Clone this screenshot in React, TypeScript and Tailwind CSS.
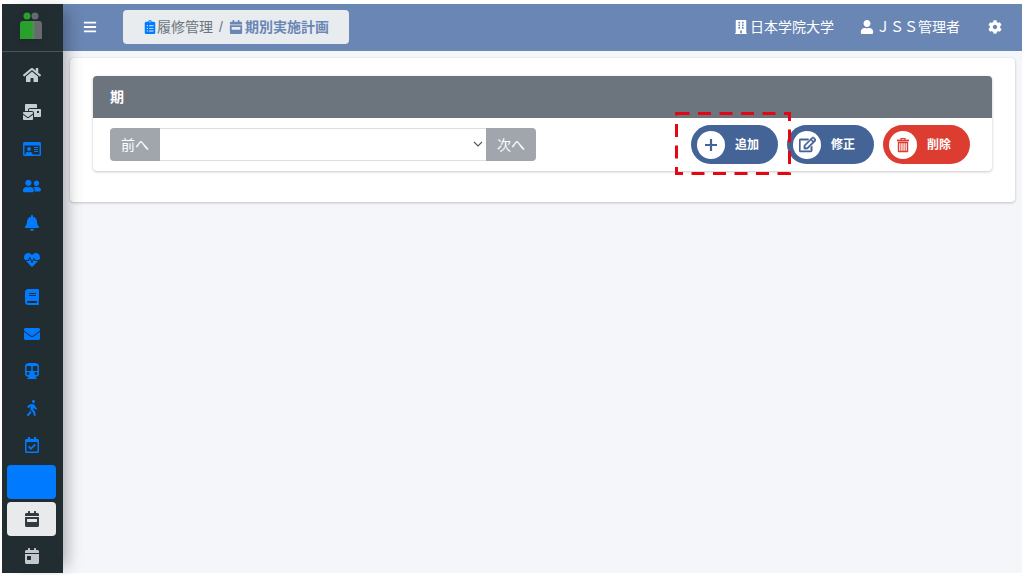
import React, { useState } from 'react';
import type { IconType } from 'react-icons';
import {
  FaBars,
  FaBell,
  FaBook,
  FaBuilding,
  FaCalendarDay,
  FaCalendarWeek,
  FaClipboardList,
  FaCog,
  FaEnvelope,
  FaHeartbeat,
  FaHome,
  FaMailBulk,
  FaRegCalendarCheck,
  FaRegEdit,
  FaRegIdCard,
  FaSubway,
  FaUser,
  FaUserFriends,
  FaWalking,
} from 'react-icons/fa';

type MenuItem = {
  label: string;
  icon?: IconType;
  className: string;
};

const menuItems: MenuItem[] = [
  { label: 'ホーム', icon: FaHome, className: 'text-[#c2d0d6]' },
  { label: '一括送信', icon: FaMailBulk, className: 'text-[#c2d0d6]' },
  { label: '学籍', icon: FaRegIdCard, className: 'text-[#007bff]' },
  { label: '保護者', icon: FaUserFriends, className: 'text-[#007bff]' },
  { label: 'お知らせ', icon: FaBell, className: 'text-[#007bff]' },
  { label: '保健', icon: FaHeartbeat, className: 'text-[#007bff]' },
  { label: '教科書', icon: FaBook, className: 'text-[#007bff]' },
  { label: 'メール', icon: FaEnvelope, className: 'text-[#007bff]' },
  { label: '通学', icon: FaSubway, className: 'text-[#007bff]' },
  { label: '就職', icon: FaWalking, className: 'text-[#007bff]' },
  { label: '出欠', icon: FaRegCalendarCheck, className: 'text-[#007bff]' },
  { label: '履修管理', className: 'bg-[#007bff] text-[#007bff]' },
  { label: '期別実施計画', icon: FaCalendarWeek, className: 'bg-[#e9eaeb] text-[#343a40]' },
  { label: '日別実施計画', icon: FaCalendarDay, className: 'text-[#c2c7d0]' },
];

const Logo: React.FC = () => (
  <svg viewBox="0 0 22 28" className="h-7 w-[22px] drop-shadow-md" aria-hidden="true">
    <defs>
      <linearGradient id="body" x1="0" x2="1">
        <stop offset="0.5" stopColor="#27a02c" />
        <stop offset="0.6" stopColor="#4f9152" />
        <stop offset="0.7" stopColor="#686b6d" />
      </linearGradient>
    </defs>
    <circle cx="15" cy="4" r="3.500" fill="#686b6d" />
    <circle cx="7" cy="4" r="3.500" fill="#27a02c" />
    <path d="M3 9h16a3 3 0 0 1 3 3v15H0V12a3 3 0 0 1 3-3z" fill="url(#body)" />
  </svg>
);

const PlusIcon: React.FC = () => (
  <svg viewBox="0 0 16 16" className="size-4" stroke="currentColor" strokeWidth="2.2">
    <path d="M8 2v12M2 8h12" />
  </svg>
);

const EditIcon: React.FC = () => (
  <FaRegEdit className="size-[17px]" stroke="currentColor" strokeWidth={16} />
);

const TrashIcon: React.FC = () => (
  <svg viewBox="0 0 16 16" className="size-4" fill="none" stroke="currentColor">
    <path d="M2 3.500h12" strokeWidth="1.800" />
    <path d="M6 3V1.500h4V3" strokeWidth="1.200" />
    <path d="M3.500 5.500h9v9h-9z" strokeWidth="1.400" strokeLinejoin="round" />
    <path d="M5.800 6v8M8 6v8M10.200 6v8" strokeWidth="0.900" />
  </svg>
);

const Sidebar: React.FC = () => (
  <aside className="z-10 w-[61px] shrink-0 bg-[#222d32] shadow-[10px_0_16px_-6px_rgba(0,0,0,0.3)]">
    <a
      href="#"
      aria-label="トップ"
      className="flex h-12 items-center justify-center border-b border-[#4b545c] pr-1 pb-1"
    >
      <Logo />
    </a>
    <nav className="flex flex-col gap-[3px] pt-[6px] pr-[7px] pl-[5px]">
      {menuItems.map(({ label, icon: Icon, className }) => (
        <a
          key={label}
          href="#"
          aria-label={label}
          className={`flex h-[34px] items-center justify-center rounded ${className}`}
        >
          {Icon && <Icon className="h-4 w-[18px]" />}
        </a>
      ))}
    </nav>
  </aside>
);

const Header: React.FC = () => (
  <header className="flex h-[47px] items-center bg-[#6a86b4] pb-px text-white">
    <button type="button" aria-label="メニュー" className="ml-5">
      <FaBars className="size-[14px]" />
    </button>
    <nav className="ml-[26px] flex h-[34px] items-center rounded bg-[#e9ecef] px-5 text-sm text-[#6c757d]">
      <a href="#" className="flex items-center">
        <FaClipboardList className="size-[14px] text-[#007bff]" />
        履修管理
      </a>
      <span className="mx-[6px]">/</span>
      <a href="#" className="flex items-center gap-0.5 font-bold text-[#6a86b4]">
        <FaCalendarWeek className="size-[14px]" />
        期別実施計画
      </a>
    </nav>
    <div className="ml-auto flex items-center pr-5 text-sm">
      <a href="#" className="flex items-center gap-0.5">
        <FaBuilding className="size-[14px]" />
        日本学院大学
      </a>
      <a href="#" className="ml-[26px] flex items-center gap-0.5">
        <FaUser className="size-[14px]" />
        ＪＳＳ管理者
      </a>
      <button type="button" aria-label="設定" className="ml-7">
        <FaCog className="size-[14px]" />
      </button>
    </div>
  </header>
);

type ActionButtonProps = {
  label: string;
  icon: React.FC;
  color: string;
};

const ActionButton: React.FC<ActionButtonProps> = ({ label, icon: Icon, color }) => (
  <button
    type="button"
    className={`flex h-[39px] w-[87px] items-center rounded-full pl-[6px] text-xs font-bold ${color}`}
  >
    <span className="flex size-7 items-center justify-center rounded-full bg-white">
      <Icon />
    </span>
    <span className="ml-[10px] text-white">{label}</span>
  </button>
);

const TermSelector: React.FC = () => {
  const [term, setTerm] = useState('');

  return (
    <div className="flex h-[33px] w-[426px] text-sm">
      <button type="button" className="w-[50px] rounded-l bg-[#a1a6ac] text-white">
        前へ
      </button>
      <div className="relative flex-1">
        <select
          aria-label="期"
          value={term}
          onChange={(e) => setTerm(e.target.value)}
          className="h-full w-full appearance-none border-y border-[#dcdfe2] bg-white px-2"
        >
          <option value=""></option>
        </select>
        <svg
          viewBox="0 0 10 6"
          className="pointer-events-none absolute top-[13px] right-[3px] h-[6px] w-[10px]"
          fill="none"
          stroke="#555"
          strokeWidth="1.1"
        >
          <path d="M1 1l4 4 4-4" />
        </svg>
      </div>
      <button type="button" className="w-[50px] rounded-r bg-[#a1a6ac] text-white">
        次へ
      </button>
    </div>
  );
};

const App: React.FC = () => (
  <div className="flex min-h-screen bg-white pt-1 pr-0.5 pb-0.5 pl-0.5 font-['Liberation_Sans','Noto_Sans_CJK_JP',sans-serif]">
    <Sidebar />
    <div className="flex min-w-0 flex-1 flex-col bg-[#f4f6f9]">
      <Header />
      <main className="px-[7px] pt-[7px]">
        <section className="rounded bg-white px-[23px] pt-[18px] pb-[31px] shadow-[0_0_1px_rgba(0,0,0,0.13),0_1px_3px_rgba(0,0,0,0.2)]">
          <div className="rounded shadow-[0_0_1px_rgba(0,0,0,0.13),0_1px_3px_rgba(0,0,0,0.2)]">
            <h2 className="flex h-[42px] items-center rounded-t bg-[#6c757d] px-[17px] text-sm font-bold text-white">
              期
            </h2>
            <div className="flex items-center justify-between py-[7px] pr-[22px] pl-[17px]">
              <TermSelector />
              <div className="flex gap-[9px]">
                <div className="relative">
                  <ActionButton label="追加" icon={PlusIcon} color="bg-[#446497] text-[#446497]" />
                  {/* highlight frame around the add button */}
                  <svg
                    viewBox="0 0 116 63"
                    className="pointer-events-none absolute -top-[13px] -left-4 z-10 h-[63px] w-[116px]"
                    fill="none"
                    stroke="#e30613"
                    strokeWidth="3"
                    strokeDasharray="13 8.500"
                  >
                    <path d="M1.500 1.500H114.500V61.500H1.500Z" />
                  </svg>
                </div>
                <ActionButton label="修正" icon={EditIcon} color="bg-[#446497] text-[#446497]" />
                <ActionButton label="削除" icon={TrashIcon} color="bg-[#dd3c30] text-[#dd3c30]" />
              </div>
            </div>
          </div>
        </section>
      </main>
    </div>
  </div>
);

export default App;
